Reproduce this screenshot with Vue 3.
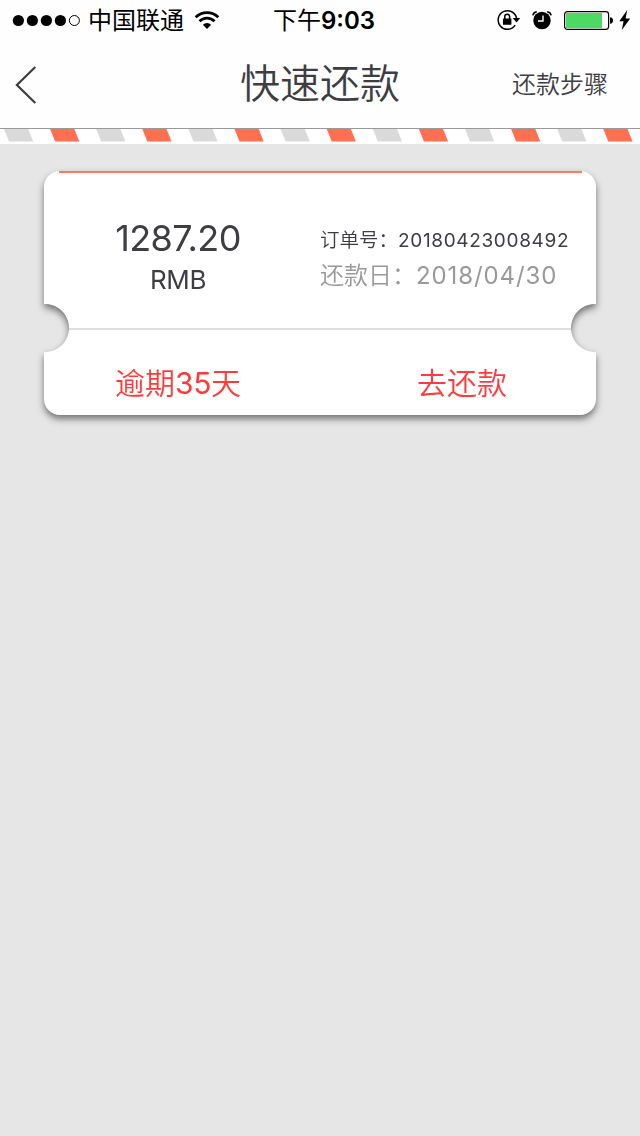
<script setup>
import { reactive } from 'vue';

const pedido = reactive({
    valor: '1287.20',
    moeda: 'RMB',
    numero: '20180423008492',
    data: '2018/04/30',
    atraso: 35,
});

// faixa de envelope: cinza e laranja alternados
const faixas = Array.from({ length: 14 }, (_, i) => ({
    x: 4 + i * 46.1,
    cor: i % 2 ? '#ff6f51' : '#dadada',
}));
</script>

<template>
    <div class="pagina">
        <div class="status">
            <div class="operadora">
                <svg class="sinal" width="70" height="14" viewBox="0 0 70 14">
                    <circle v-for="n in 4" :key="n" :cx="n * 14 - 7.6" cy="7.5" r="5.6" />
                    <circle cx="62.4" cy="7.5" r="5" fill="none" stroke="#000" />
                </svg>
                <span class="nome">中国联通</span>
                <svg class="wifi" width="26" height="20" viewBox="0 0 26 20">
                    <g fill="none" stroke="#000" stroke-width="2.7">
                        <path d="M1.7 7.2a16 16 0 0 1 22.6 0" />
                        <path d="M5.5 11.2a10.5 10.5 0 0 1 15 0" />
                    </g>
                    <path d="M8.9 14.8a5.8 5.8 0 0 1 8.2 0L13 18.9z" />
                </svg>
            </div>
            <div class="hora">下午<b>9:03</b></div>
            <div class="indicadores">
                <svg class="trava" width="24" height="22" viewBox="0 0 24 22">
                    <path d="M18.2 16.2A9.3 9.3 0 1 1 19.6 9.3" fill="none" stroke="#000" stroke-width="1.5" />
                    <path d="M15.7 9h7.5l-3.7 4.4z" />
                    <rect x="6" y="9.4" width="8.4" height="6.4" rx=".6" />
                    <path d="M7.8 10V7.6a2.4 2.4 0 0 1 4.8 0V10" fill="none" stroke="#000" stroke-width="1.5" />
                </svg>
                <svg class="alarme" width="20" height="20" viewBox="0 0 20 20">
                    <circle cx="10" cy="10.5" r="8.7" />
                    <path d="M.9 5.4C1.2 3.4 2.6 2 4.8 1.7M19.1 5.4c-.3-2-1.7-3.4-3.9-3.7" fill="none" stroke="#000" stroke-width="1.6" />
                    <path d="M11 5.4V11H6" fill="none" stroke="#fff" stroke-width="1.4" />
                </svg>
                <svg class="bateria" width="50" height="20" viewBox="0 0 50 20">
                    <rect x=".6" y="1.6" width="44" height="17.8" rx="2.8" fill="#fff" stroke="#000" stroke-width="1.2" />
                    <rect x="2" y="3" width="36" height="15" fill="#4cd964" />
                    <path d="M46 7.2c4 0 4 6.6 0 6.6z" />
                </svg>
                <svg class="raio" width="12" height="20" viewBox="0 0 12 20">
                    <path d="M8.2 0L.3 11.2h4.3L2.8 20l8.4-11.6H6.6z" />
                </svg>
            </div>
        </div>

        <header class="cabecalho">
            <div class="lado">
                <svg class="voltar" width="24" height="40" viewBox="0 0 24 40">
                    <path d="M21.3 2L2.9 20l18.4 18" fill="none" stroke="#3d3d42" stroke-width="2.2" />
                </svg>
            </div>
            <h1 class="titulo">快速还款</h1>
            <div class="lado passos">还款步骤</div>
        </header>

        <svg class="faixa" width="640" height="16" viewBox="0 0 640 16">
            <path
                v-for="f in faixas"
                :key="f.x"
                :d="`M${f.x} 1h24.2l5 12.5h-24.2z`"
                :fill="f.cor"
            />
            <rect width="640" height="1" fill="#999" />
        </svg>

        <div class="sombra">
            <div class="bilhete">
                <div class="linha-topo"></div>
                <div class="dados">
                    <div class="total">
                        <p class="valor">{{ pedido.valor }}</p>
                        <p class="moeda">{{ pedido.moeda }}</p>
                    </div>
                    <div class="detalhes">
                        <p class="numero">订单号：<span>{{ pedido.numero }}</span></p>
                        <p class="data">还款日：<span>{{ pedido.data }}</span></p>
                    </div>
                </div>
                <div class="acoes">
                    <div class="acao">逾期<span>{{ pedido.atraso }}</span>天</div>
                    <div class="acao">去还款</div>
                </div>
            </div>
        </div>
    </div>
</template>

<style>
body {
    margin: 0;
    background-color: #e6e6e6;
}
</style>

<style scoped>
* {
    margin: 0;
    padding: 0;
    box-sizing: border-box;
}

svg {
    display: block;
    flex-shrink: 0;
}

.pagina {
    width: 640px;
    height: 1136px;
    background-color: #e6e6e6;
    color: #3d3d42;
    font-family: Inter, "Noto Sans CJK SC", sans-serif;
    font-weight: 350;
    white-space: nowrap;
}

.status {
    display: grid;
    grid-template-columns: 230px 188px 1fr;
    grid-template-rows: 40px;
    height: 40px;
    background-color: #fefefe;
    color: #000;
    font-size: 24px;
    font-weight: 400;
    line-height: 40px;
}

.operadora,
.indicadores {
    display: flex;
    align-items: center;
}

.sinal {
    margin-left: 12px;
}

.nome {
    margin-left: 6px;
    padding-top: 2px;
}

.wifi {
    margin-left: 10px;
}

.hora {
    padding-top: 1px;
    text-align: center;
}

.hora b {
    font-weight: 600;
}

.indicadores {
    padding-left: 79px;
}

.alarme {
    margin-left: 11px;
}

.bateria {
    margin-left: 12px;
}

.raio {
    margin-left: 5px;
}

.cabecalho {
    display: grid;
    grid-template-columns: 160px 320px 160px;
    align-items: center;
    height: 88px;
    background-color: #fefefe;
}

.voltar {
    margin-left: 14px;
    margin-top: 2px;
}

.titulo {
    font-size: 40px;
    font-weight: 350;
    line-height: 56px;
    text-align: center;
}

.passos {
    padding: 0 32px 4px 0;
    font-size: 24px;
    text-align: right;
}

.faixa {
    background-color: #fff;
}

.sombra {
    margin: 27px 44px 0;
    filter: drop-shadow(0 4px 3.5px rgba(0, 0, 0, 0.5));
}

/* recortes laterais do bilhete */
.bilhete {
    height: 244px;
    border-radius: 16px;
    background:
        radial-gradient(circle at 1px 157px, transparent 23.6px, #fff 24.4px) left / 50% 100% no-repeat,
        radial-gradient(circle at 275px 157px, transparent 23.6px, #fff 24.4px) right / 50% 100% no-repeat;
}

.linha-topo {
    height: 2px;
    margin: 0 14px 0 15px;
    background-color: #ff7b5f;
}

.dados {
    display: grid;
    grid-template-columns: 251px 251px;
    height: 157px;
    margin: 0 25px;
    border-bottom: 2px solid #dfdfdf;
}

.total {
    padding-top: 43px;
    margin-left: -33px;
    font-weight: 400;
    text-align: center;
}

.valor {
    font-size: 36px;
    line-height: 44px;
    letter-spacing: -0.6px;
}

.moeda {
    margin-top: 4px;
    font-size: 26px;
    line-height: 32px;
    letter-spacing: -0.4px;
}

.detalhes {
    padding-top: 50px;
}

.numero {
    font-size: 19.5px;
    line-height: 34px;
}

.numero span {
    font-size: 19px;
    font-weight: 400;
    letter-spacing: 0.65px;
}

.data {
    color: #999;
    font-size: 24px;
    line-height: 35px;
}

.data span {
    font-weight: 400;
    letter-spacing: 0.9px;
}

.acoes {
    display: grid;
    grid-template-columns: 268px 300px;
    padding-top: 31px;
    color: #ff3b3b;
    font-size: 30px;
    line-height: 44px;
    text-align: center;
}

.acao span {
    font-weight: 400;
    letter-spacing: -0.5px;
}
</style>
